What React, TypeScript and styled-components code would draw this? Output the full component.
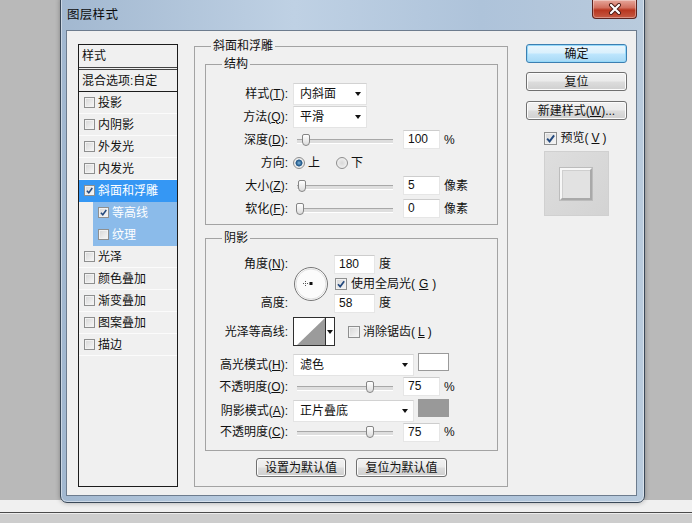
import styled, { createGlobalStyle } from "styled-components";

const GlobalStyle = createGlobalStyle`
  html, body { margin: 0; padding: 0; }
  body {
    width: 692px;
    height: 523px;
    overflow: hidden;
    background: #b9b9b9;
    font-family: "Liberation Sans", "Noto Sans CJK SC", sans-serif;
    font-size: 12px;
    line-height: 16px;
    color: #111;
  }
  * { box-sizing: border-box; }
`;

// page frame
const Screen = styled.div`
  width: 692px;
  height: 523px;
  display: flex;
  flex-direction: column;
  overflow: hidden;
`;

const Desktop = styled.div`
  position: relative;
  flex: none;
  height: 500px;
  background: #b9b9b9;
`;

const StatusStrip = styled.div`
  flex: none;
  height: 13px;
  background: #f0f0f0;
  border-bottom: 1px solid #4a4a4a;
`;

const StatusBottom = styled.div`
  flex: 1;
  background: #cdcdcd;
  border-top: 1px solid #ececec;
`;

// window chrome
const Window = styled.div`
  position: absolute;
  left: 60px;
  top: -2px;
  width: 585px;
  height: 505px;
  display: flex;
  flex-direction: column;
  padding: 0 7px 6px 5px;
  border: 1px solid #3a4858;
  border-radius: 0 0 7px 7px;
  background: linear-gradient(90deg, #a2b8d0 0%, #bfd1e4 40%, #aec3da 72%, #b9cbdd 100%);
  box-shadow: 0 0 5px rgba(0, 0, 0, 0.3), inset 0 0 0 1px rgba(255, 255, 255, 0.45);
`;

const TitleBar = styled.div`
  flex: none;
  height: 31px;
  display: flex;
  justify-content: space-between;
  align-items: flex-start;
`;

const Title = styled.div`
  align-self: center;
  padding-left: 1px;
  font-size: 12.5px;
  letter-spacing: 0.3px;
  color: #0c0c0c;
`;

const CloseButton = styled.div`
  width: 45px;
  height: 19px;
  margin-top: 1px;
  display: flex;
  align-items: center;
  justify-content: center;
  border: 1px solid #5b2420;
  border-top: none;
  border-radius: 0 0 4px 4px;
  background: linear-gradient(#e6a79b 0%, #d2705f 42%, #b8361f 56%, #c65a44 100%);
  box-shadow: inset 0 0 0 1px rgba(255, 255, 255, 0.35);
`;

const Client = styled.div`
  flex: 1;
  display: flex;
  align-items: flex-start;
  padding: 7px 0 0 11px;
  background: #f0f0f0;
  border: 1px solid #6d7c8e;
`;

// left style list
const StyleList = styled.div`
  flex: none;
  width: 100px;
  height: 443px;
  margin-top: 6px;
  border: 1px solid #1c1c1c;
  background: #f0f0f0;
`;

const ListHeader = styled.div`
  height: 25px;
  padding: 3px 0 0 3px;
  border-bottom: 3px double #444;
  line-height: 17px;
`;

const BlendRow = styled.div`
  height: 22px;
  display: flex;
  align-items: center;
  padding-left: 3px;
  border-bottom: 1px solid #1c1c1c;
`;

const ListItem = styled.div<{ $state?: "active" | "sub" }>`
  height: 22px;
  display: flex;
  align-items: center;
  gap: 3px;
  margin-left: ${(p) => (p.$state === "sub" ? 14 : 0)}px;
  padding-left: 5px;
  border-bottom: 1px solid ${(p) => (p.$state ? "transparent" : "#fbfbfb")};
  background: ${(p) =>
    p.$state === "active" ? "#3597f4" : p.$state === "sub" ? "#8bbbea" : "transparent"};
  color: ${(p) => (p.$state ? "#fff" : "#111")};
`;

// checkbox / radio
const CheckBox = styled.span<{ $size: number }>`
  flex: none;
  width: ${(p) => p.$size}px;
  height: ${(p) => p.$size}px;
  display: inline-flex;
  align-items: center;
  justify-content: center;
  border: 1px solid #8e8f8f;
  background: linear-gradient(135deg, #d6d6d6 0%, #f8f8f8 100%);
  box-shadow: inset 0 0 0 1px #f2f2f2;
`;

const Check = ({ on, size = 12 }: { on?: boolean; size?: number }) => (
  <CheckBox $size={size}>
    {on && (
      <svg width={size - 4} height={size - 4} viewBox="0 0 8 8">
        <path d="M1 4.2 L3.2 6.6 L7.2 1.2" stroke="#23497e" strokeWidth="1.7" fill="none" />
      </svg>
    )}
  </CheckBox>
);

const Radio = styled.span<{ $on?: boolean }>`
  flex: none;
  width: 12px;
  height: 12px;
  border-radius: 50%;
  border: 1px solid #8d8d8d;
  background: ${(p) =>
    p.$on
      ? "radial-gradient(circle, #7fb6dc 0, #2a6090 2.5px, #2a6090 3.2px, #e9e9e9 3.8px, #f9f9f9 100%)"
      : "radial-gradient(circle, #d8d8d8 0, #f9f9f9 100%)"};
`;

const Option = styled.label`
  display: flex;
  align-items: center;
  gap: 3px;
  margin-right: 16px;
`;

// middle panel
const GroupBox = styled.fieldset`
  flex: none;
  width: 314px;
  min-width: 0;
  margin: 0 18px 0 16px;
  padding: 2px 9px 9px 10px;
  border: 1px solid #a3a3a3;
`;

const Legend = styled.legend<{ $indent: number }>`
  margin-left: ${(p) => p.$indent}px;
  padding: 0 2px;
  line-height: 16px;
`;

const Section = styled.fieldset<{ $pad: string; $mt?: number }>`
  min-width: 0;
  margin: ${(p) => p.$mt ?? 0}px 0 0;
  padding: ${(p) => p.$pad};
  border: 1px solid #a3a3a3;
`;

const Row = styled.div<{ $h: number; $mt?: number }>`
  height: ${(p) => p.$h}px;
  margin-top: ${(p) => p.$mt ?? 0}px;
  display: flex;
  align-items: center;
`;

const Label = styled.span`
  flex: none;
  width: 82px;
  margin-right: 5px;
  text-align: right;
  white-space: nowrap;
`;

const Key = styled.u`
  text-underline-offset: 1px;
`;

const Select = styled.div<{ $w: number }>`
  flex: none;
  width: ${(p) => p.$w}px;
  height: 22px;
  display: flex;
  align-items: center;
  justify-content: space-between;
  padding: 0 5px 0 6px;
  background: #fff;
  border: 1px solid #e4e4e4;
  border-top-color: #d2d2d2;
`;

const Arrow = styled.span`
  width: 0;
  height: 0;
  border-left: 3.5px solid transparent;
  border-right: 3.5px solid transparent;
  border-top: 4px solid #111;
`;

const Field = styled.div<{ $w?: number }>`
  flex: none;
  width: ${(p) => p.$w ?? 37}px;
  height: 19px;
  padding-left: 4px;
  line-height: 17px;
  background: #fff;
  border: 1px solid #e6e6e6;
  border-top-color: #cdcdcd;
`;

const Unit = styled.span`
  margin-left: 4px;
`;

const Slider = styled.div`
  position: relative;
  flex: none;
  width: 100px;
  height: 14px;
  margin-right: 10px;
  &::before {
    content: "";
    position: absolute;
    left: 4px;
    right: 0;
    top: 6px;
    height: 3px;
    border-top: 1px solid #a8a8a8;
    border-bottom: 1px solid #fff;
    background: #dedede;
  }
`;

const Thumb = styled.span<{ $at: number }>`
  position: absolute;
  top: 1px;
  left: ${(p) => p.$at - 4}px;
  width: 8px;
  height: 12px;
  border: 1px solid #858585;
  border-radius: 2px 2px 4px 4px;
  background: linear-gradient(#ffffff, #dcdcdc);
`;

const AngleGrid = styled.div`
  display: grid;
  grid-template-columns: 87px 41px 1fr;
  grid-template-rows: 20px 19px 20px;
  align-items: center;
`;

const GridLabel = styled.span<{ $row: number }>`
  grid-column: 1;
  grid-row: ${(p) => p.$row};
  padding-right: 5px;
  text-align: right;
`;

const Dial = styled.div`
  grid-column: 2;
  grid-row: 1 / span 3;
  display: flex;
`;

const GridCell = styled.div<{ $row: number; $gap?: number }>`
  grid-column: 3;
  grid-row: ${(p) => p.$row};
  display: flex;
  align-items: center;
  gap: ${(p) => p.$gap ?? 0}px;
  padding-left: ${(p) => (p.$gap ? 1 : 0)}px;
`;

const ContourPicker = styled.div`
  flex: none;
  width: 42px;
  height: 29px;
  display: flex;
  margin-right: 13px;
  border: 1px solid #2f2f2f;
  background: #fff;
`;

const ContourArrow = styled.div`
  flex: 1;
  display: flex;
  align-items: center;
  justify-content: center;
  border-left: 1px solid #2f2f2f;
`;

const Swatch = styled.div<{ $color: string }>`
  flex: none;
  width: 31px;
  height: 18px;
  margin-left: 4px;
  align-self: flex-start;
  margin-top: 0;
  background: ${(p) => p.$color};
  border: 1px solid ${(p) => (p.$color === "#ffffff" ? "#9a9a9a" : "#999")};
`;

const FooterButtons = styled.div`
  display: flex;
  justify-content: center;
  gap: 10px;
  margin-top: 7px;
`;

const Button = styled.div<{ $w: number; $default?: boolean }>`
  flex: none;
  width: ${(p) => p.$w}px;
  height: 19px;
  display: flex;
  align-items: center;
  justify-content: center;
  border: 1px solid ${(p) => (p.$default ? "#3c7fb1" : "#707070")};
  border-radius: 3px;
  background: ${(p) =>
    p.$default
      ? "linear-gradient(#eaf6fd 0%, #d9f0fc 48%, #bee6fd 52%, #a7d9f5 100%)"
      : "linear-gradient(#f2f2f2 0%, #ebebeb 48%, #dddddd 52%, #cfcfcf 100%)"};
  box-shadow: inset 0 0 0 1px ${(p) => (p.$default ? "#96d9f9" : "#fcfcfc")};
  white-space: nowrap;
`;

// right column
const SideColumn = styled.div`
  flex: none;
  width: 101px;
  display: flex;
  flex-direction: column;
  align-items: center;
  margin-top: 6px;
`;

const SideButton = styled(Button)<{ $mt?: number }>`
  margin-top: ${(p) => p.$mt ?? 0}px;
`;

const PreviewToggle = styled.label`
  height: 16px;
  margin-top: 10px;
  display: flex;
  align-items: center;
  gap: 3px;
  padding-right: 2px;
`;

const PreviewBox = styled.div`
  width: 65px;
  height: 65px;
  margin-top: 5px;
  padding-right: 1px;
  display: flex;
  align-items: center;
  justify-content: center;
  background: linear-gradient(135deg, #dedede, #d3d3d3);
  border: 1px solid #d0d0d0;
`;

const PreviewTile = styled.div`
  width: 32px;
  height: 32px;
  background: #e2e2e2;
  border: 2px solid;
  border-color: #f7f7f7 #a9a9a9 #a9a9a9 #f7f7f7;
  box-shadow: 0 0 0 1px #bcbcbc, inset 1px 1px 0 #cfcfcf;
`;

const listItems = [
  { text: "投影" },
  { text: "内阴影" },
  { text: "外发光" },
  { text: "内发光" },
  { text: "斜面和浮雕", on: true, state: "active" as const },
  { text: "等高线", on: true, state: "sub" as const },
  { text: "纹理", state: "sub" as const },
  { text: "光泽" },
  { text: "颜色叠加" },
  { text: "渐变叠加" },
  { text: "图案叠加" },
  { text: "描边" },
];

const App = () => {
  return (
    <>
      <GlobalStyle />
      <Screen>
        <Desktop>
          <Window>
            <TitleBar>
              <Title>图层样式</Title>
              <CloseButton>
                <svg width="14" height="12" viewBox="0 0 14 12">
                  <path
                    d="M3 2 L11 10 M11 2 L3 10"
                    stroke="#4a1a14"
                    strokeWidth="4"
                    strokeLinecap="round"
                  />
                  <path d="M3 2 L11 10 M11 2 L3 10" stroke="#fff" strokeWidth="2.2" strokeLinecap="round" />
                </svg>
              </CloseButton>
            </TitleBar>

            <Client>
              <StyleList>
                <ListHeader>样式</ListHeader>
                <BlendRow>混合选项:自定</BlendRow>
                {listItems.map((item) => (
                  <ListItem key={item.text} $state={item.state}>
                    <Check on={item.on} size={11} />
                    {item.text}
                  </ListItem>
                ))}
              </StyleList>

              <GroupBox>
                <Legend $indent={6}>斜面和浮雕</Legend>

                <Section $pad="10px 0 4px 0">
                  <Legend $indent={16}>结构</Legend>
                  <Row $h={23}>
                    <Label>
                      样式(<Key>T</Key>):
                    </Label>
                    <Select $w={74}>
                      内斜面
                      <Arrow />
                    </Select>
                  </Row>
                  <Row $h={23}>
                    <Label>
                      方法(<Key>Q</Key>):
                    </Label>
                    <Select $w={74}>
                      平滑
                      <Arrow />
                    </Select>
                  </Row>
                  <Row $h={23}>
                    <Label>
                      深度(<Key>D</Key>):
                    </Label>
                    <Slider>
                      <Thumb $at={13} />
                    </Slider>
                    <Field>100</Field>
                    <Unit>%</Unit>
                  </Row>
                  <Row $h={23}>
                    <Label>方向:</Label>
                    <Option>
                      <Radio $on />上
                    </Option>
                    <Option>
                      <Radio />下
                    </Option>
                  </Row>
                  <Row $h={23}>
                    <Label>
                      大小(<Key>Z</Key>):
                    </Label>
                    <Slider>
                      <Thumb $at={9} />
                    </Slider>
                    <Field>5</Field>
                    <Unit>像素</Unit>
                  </Row>
                  <Row $h={23}>
                    <Label>
                      软化(<Key>F</Key>):
                    </Label>
                    <Slider>
                      <Thumb $at={7} />
                    </Slider>
                    <Field>0</Field>
                    <Unit>像素</Unit>
                  </Row>
                </Section>

                <Section $pad="8px 0 8px 0" $mt={5}>
                  <Legend $indent={16}>阴影</Legend>
                  <AngleGrid>
                    <GridLabel $row={1}>
                      角度(<Key>N</Key>):
                    </GridLabel>
                    <Dial>
                      <svg width="36" height="36" viewBox="0 0 36 36">
                        <circle cx="18" cy="18" r="16.5" fill="#fbfbfb" stroke="#777" />
                        <circle cx="18" cy="18" r="15" fill="none" stroke="#e0e0e0" />
                        <path
                          d="M10 17.5h5M12.5 15v5"
                          stroke="#555"
                          strokeWidth="1"
                          strokeDasharray="1 1"
                        />
                        <rect x="16.5" y="16" width="3" height="3" fill="#111" />
                      </svg>
                    </Dial>
                    <GridCell $row={1}>
                      <Field $w={41}>180</Field>
                      <Unit>度</Unit>
                    </GridCell>
                    <GridCell $row={2} $gap={4}>
                      <Check on />
                      使用全局光(<Key>G</Key>)
                    </GridCell>
                    <GridLabel $row={3}>高度:</GridLabel>
                    <GridCell $row={3}>
                      <Field $w={41}>58</Field>
                      <Unit>度</Unit>
                    </GridCell>
                  </AngleGrid>

                  <Row $h={29} $mt={4}>
                    <Label>光泽等高线:</Label>
                    <ContourPicker>
                      <svg width="31" height="27" viewBox="0 0 31 27">
                        <rect width="31" height="27" fill="#fff" />
                        <polygon points="3,27 31,0 31,27" fill="#9b9b9b" />
                      </svg>
                      <ContourArrow>
                        <Arrow />
                      </ContourArrow>
                    </ContourPicker>
                    <Option>
                      <Check />
                      消除锯齿(<Key>L</Key>)
                    </Option>
                  </Row>

                  <Row $h={23} $mt={7}>
                    <Label>
                      高光模式(<Key>H</Key>):
                    </Label>
                    <Select $w={121}>
                      滤色
                      <Arrow />
                    </Select>
                    <Swatch $color="#ffffff" />
                  </Row>
                  <Row $h={21}>
                    <Label>
                      不透明度(<Key>O</Key>):
                    </Label>
                    <Slider>
                      <Thumb $at={77} />
                    </Slider>
                    <Field>75</Field>
                    <Unit>%</Unit>
                  </Row>
                  <Row $h={23} $mt={2}>
                    <Label>
                      阴影模式(<Key>A</Key>):
                    </Label>
                    <Select $w={121}>
                      正片叠底
                      <Arrow />
                    </Select>
                    <Swatch $color="#999999" />
                  </Row>
                  <Row $h={20}>
                    <Label>
                      不透明度(<Key>C</Key>):
                    </Label>
                    <Slider>
                      <Thumb $at={77} />
                    </Slider>
                    <Field>75</Field>
                    <Unit>%</Unit>
                  </Row>
                </Section>

                <FooterButtons>
                  <Button $w={90}>设置为默认值</Button>
                  <Button $w={91}>复位为默认值</Button>
                </FooterButtons>
              </GroupBox>

              <SideColumn>
                <SideButton $w={101} $default>
                  确定
                </SideButton>
                <SideButton $w={101} $mt={9}>
                  复位
                </SideButton>
                <SideButton $w={101} $mt={10}>
                  新建样式(<Key>W</Key>)...
                </SideButton>
                <PreviewToggle>
                  <Check on size={13} />
                  预览(<Key>V</Key>)
                </PreviewToggle>
                <PreviewBox>
                  <PreviewTile />
                </PreviewBox>
              </SideColumn>
            </Client>
          </Window>
        </Desktop>
        <StatusStrip />
        <StatusBottom />
      </Screen>
    </>
  );
};

export default App;
